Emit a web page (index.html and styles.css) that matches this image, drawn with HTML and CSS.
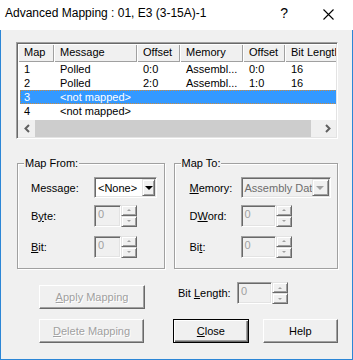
FILE: index.html
```html
<!doctype html>
<html>
<head>
<meta charset="utf-8">
<title>Advanced Mapping</title>
<link rel="stylesheet" href="styles.css">
</head>
<body>

<div class="window">
  <div class="titlebar">
    <span class="title">Advanced Mapping : 01, E3 (3-15A)-1</span>
    <span class="tb-help">?</span>
    <span class="tb-close">
      <svg width="11" height="11" viewBox="0 0 11 11"><path d="M0.5 0.5L10.5 10.5M10.5 0.5L0.5 10.5" stroke="#000" stroke-width="1.1" fill="none"/></svg>
    </span>
  </div>

  <div class="client">

    <div class="list">
      <div class="list-view">
        <div class="list-head">
          <div class="hcell">Map</div>
          <div class="hcell">Message</div>
          <div class="hcell">Offset</div>
          <div class="hcell">Memory</div>
          <div class="hcell">Offset</div>
          <div class="hcell">Bit Length</div>
        </div>
        <div class="list-row"><span>1</span><span>Polled</span><span>0:0</span><span>Assembl...</span><span>0:0</span><span>16</span></div>
        <div class="list-row"><span>2</span><span>Polled</span><span>2:0</span><span>Assembl...</span><span>1:0</span><span>16</span></div>
        <div class="list-row selected"><span>3</span><span>&lt;not mapped&gt;</span><span></span><span></span><span></span><span></span></div>
        <div class="list-row"><span>4</span><span>&lt;not mapped&gt;</span><span></span><span></span><span></span><span></span></div>
      </div>
      <div class="hscroll">
        <div class="sb-btn">
          <svg width="6" height="9" viewBox="0 0 6 9"><path d="M5 1L1.5 4.5L5 8" stroke="#606060" stroke-width="2" fill="none"/></svg>
        </div>
        <div class="sb-thumb"></div>
        <div class="sb-track"></div>
        <div class="sb-btn">
          <svg width="6" height="9" viewBox="0 0 6 9"><path d="M1 1L4.5 4.5L1 8" stroke="#606060" stroke-width="2" fill="none"/></svg>
        </div>
      </div>
    </div>

    <div class="groups">
      <fieldset class="group group-from">
        <legend>Map From:</legend>
        <div class="group-body">
          <div class="field">
            <label>Message:</label>
            <div class="combo">
              <span class="combo-text">&lt;None&gt;</span>
              <span class="combo-btn"><i class="tri-down"></i></span>
            </div>
          </div>
          <div class="field">
            <label>B<u>y</u>te:</label>
            <div class="spin">
              <span class="spin-edit">0</span>
              <span class="spin-btns"><span class="spin-up"><i class="tri-up"></i></span><span class="spin-down"><i class="tri-dn"></i></span></span>
            </div>
          </div>
          <div class="field field-bit">
            <label><u>B</u>it:</label>
            <div class="spin">
              <span class="spin-edit">0</span>
              <span class="spin-btns"><span class="spin-up"><i class="tri-up"></i></span><span class="spin-down"><i class="tri-dn"></i></span></span>
            </div>
          </div>
        </div>
      </fieldset>

      <fieldset class="group group-to">
        <legend>Map To:</legend>
        <div class="group-body">
          <div class="field">
            <label><u>M</u>emory:</label>
            <div class="combo disabled">
              <span class="combo-text">Assembly Data</span>
              <span class="combo-btn"><i class="tri-down"></i></span>
            </div>
          </div>
          <div class="field">
            <label>D<u>W</u>ord:</label>
            <div class="spin wide">
              <span class="spin-edit">0</span>
              <span class="spin-btns"><span class="spin-up"><i class="tri-up"></i></span><span class="spin-down"><i class="tri-dn"></i></span></span>
            </div>
          </div>
          <div class="field field-bit">
            <label>Bi<u>t</u>:</label>
            <div class="spin wide">
              <span class="spin-edit">0</span>
              <span class="spin-btns"><span class="spin-up"><i class="tri-up"></i></span><span class="spin-down"><i class="tri-dn"></i></span></span>
            </div>
          </div>
        </div>
      </fieldset>
    </div>

    <div class="action-row first">
      <button class="btn btn-wide btn-apply" disabled><u>A</u>pply Mapping</button>
      <div class="bitlen">
        <label>Bit <u>L</u>ength:</label>
        <div class="spin wide">
          <span class="spin-edit">0</span>
          <span class="spin-btns"><span class="spin-up"><i class="tri-up"></i></span><span class="spin-down"><i class="tri-dn"></i></span></span>
        </div>
      </div>
    </div>

    <div class="action-row">
      <button class="btn btn-wide" disabled><u>D</u>elete Mapping</button>
      <button class="btn btn-default"><u>C</u>lose</button>
      <button class="btn btn-help">Help</button>
    </div>

  </div>
</div>

</body>
</html>
```

FILE: styles.css
```css
body {
  margin: 0;
  font: 11px "Liberation Sans", Arial, sans-serif;
  color: #000;
}

.window {
  width: 353px;
  height: 360px;
  display: flex;
  flex-direction: column;
  background: #f0f0f0;
}

/* title bar */

.titlebar {
  height: 30px;
  flex: none;
  background: #fff;
  display: flex;
  align-items: center;
  padding: 0 19px 4px 5px;
  box-sizing: border-box;
}

.title {
  flex: 1;
  font-size: 12px;
  white-space: nowrap;
}

.tb-help {
  font-size: 14px;
  margin-right: 35px;
}

.tb-close {
  display: flex;
  margin-top: 2px;
}

/* client area */

.client {
  flex: 1;
  border: 1px solid #2b86d6;
  border-top: none;
  padding: 12px 14px 0 15px;
}

/* list view */

.list {
  width: 322px;
  height: 97px;
  box-sizing: border-box;
  border: 1px solid;
  border-color: #a0a0a0 #fff #fff #a0a0a0;
  box-shadow: inset 1px 1px 0 #696969, inset -1px -1px 0 #e3e3e3;
  padding: 1px;
  background: #fff;
  display: flex;
  flex-direction: column;
}

.list-view {
  flex: 1;
  overflow: hidden;
}

.list-head {
  display: grid;
  grid-template-columns: 36px 83px 43px 63px 42px 70px;
  width: 337px;
  height: 18px;
  margin-bottom: 0;
}

.hcell {
  background: #f0f0f0;
  box-shadow: inset 1px 1px 0 #fff, inset -1px -1px 0 #a0a0a0;
  padding: 2px 0 0 6px;
  white-space: nowrap;
  overflow: hidden;
}

.list-row {
  display: grid;
  grid-template-columns: 34px 83px 43px 63px 42px 70px;
  width: 335px;
  height: 14px;
  line-height: 14px;
  margin-left: 2px;
  white-space: nowrap;
}

.list-row span {
  padding-left: 4px;
  overflow: hidden;
}

.list-row span + span {
  padding-left: 6px;
}

.list-row.selected {
  background: #3399ff;
  color: #fff;
  outline: 1px dotted #d08a3a;
  outline-offset: -1px;
}

.hscroll {
  height: 17px;
  display: flex;
  background: #f0f0f0;
  margin-bottom: 0;
}

.sb-btn {
  width: 17px;
  display: flex;
  align-items: center;
  justify-content: center;
}

.sb-thumb {
  width: 276px;
  background: #cdcdcd;
}

.sb-track {
  flex: 1;
}

/* group boxes */

.groups {
  display: flex;
  gap: 9px;
  margin: 18px 0 0 1px;
}

.group {
  margin: 0;
  padding: 0;
  min-width: 0;
  height: 112px;
  box-sizing: border-box;
  border: 1px solid #a0a0a0;
  box-shadow: inset 1px 1px 0 #fff, 1px 1px 0 #fff;
}

.group-from {
  width: 148px;
}

.group-to {
  width: 165px;
}

.group legend {
  margin-left: 6px;
  padding: 0 1px;
  line-height: 13px;
  background: #f0f0f0;
}

.group-body {
  padding: 7px 0 0 13px;
}

.group-to .group-body {
  padding-left: 15px;
}

.field {
  display: flex;
  align-items: center;
  height: 21px;
}

.field + .field {
  margin-top: 7px;
}

.field.field-bit {
  margin-top: 10px;
}

.field label {
  width: 63px;
  flex: none;
}

.group-to .field label {
  width: 51px;
}

/* combo boxes */

.combo {
  width: 63px;
  height: 21px;
  box-sizing: border-box;
  border: 1px solid;
  border-color: #a0a0a0 #fff #fff #a0a0a0;
  box-shadow: inset 1px 1px 0 #696969, inset -1px -1px 0 #e3e3e3;
  background: #fff;
  display: flex;
  align-items: center;
  padding: 1px;
}

.group-to .combo {
  width: 90px;
}

.combo-text {
  flex: 1;
  padding-left: 2px;
  white-space: nowrap;
  overflow: hidden;
}

.combo-btn {
  width: 13px;
  height: 17px;
  box-sizing: border-box;
  flex: none;
  background: #f0f0f0;
  border: 1px solid;
  border-color: #e3e3e3 #696969 #696969 #e3e3e3;
  box-shadow: inset 1px 1px 0 #fff, inset -1px -1px 0 #a0a0a0;
  display: flex;
  align-items: center;
  justify-content: center;
}

.tri-down {
  width: 0;
  height: 0;
  border-left: 4px solid transparent;
  border-right: 4px solid transparent;
  border-top: 4px solid #000;
  margin-top: 1px;
}

.combo.disabled {
  background: #f0f0f0;
  color: #6d6d6d;
}

.combo.disabled .combo-btn {
  width: 17px;
}

.combo.disabled .tri-down {
  border-top-color: #a0a0a0;
}

/* spin boxes */

.spin {
  display: flex;
  height: 22px;
}

.spin-edit {
  width: 27px;
  box-sizing: border-box;
  border: 1px solid;
  border-color: #a0a0a0 #fff #fff #a0a0a0;
  box-shadow: inset 1px 1px 0 #696969, inset -1px -1px 0 #e3e3e3;
  background: #f0f0f0;
  color: #a0a0a0;
  padding: 2px 0 0 3px;
}

.spin.wide .spin-edit {
  width: 35px;
}

.spin-btns {
  width: 16px;
  display: flex;
  flex-direction: column;
}

.spin-up,
.spin-down {
  flex: 1;
  box-sizing: border-box;
  background: #f0f0f0;
  border: 1px solid;
  border-color: #e3e3e3 #696969 #696969 #e3e3e3;
  box-shadow: inset 1px 1px 0 #fff, inset -1px -1px 0 #a0a0a0;
  display: flex;
  align-items: center;
  justify-content: center;
}

.tri-up,
.tri-dn {
  width: 0;
  height: 0;
  border-left: 2px solid transparent;
  border-right: 2px solid transparent;
}

.tri-up {
  border-bottom: 2px solid #a0a0a0;
}

.tri-dn {
  border-top: 2px solid #a0a0a0;
}

/* bottom buttons */

.action-row {
  display: flex;
  align-items: flex-start;
  padding-left: 23px;
  margin-top: 10px;
}

.action-row.first {
  margin-top: 13px;
}

.btn {
  height: 24px;
  box-sizing: border-box;
  font: 11px "Liberation Sans", Arial, sans-serif;
  color: #000;
  background: #f0f0f0;
  border: 1px solid;
  border-color: #fff #696969 #696969 #fff;
  box-shadow: inset -1px -1px 0 #a0a0a0;
  padding: 0;
}

.btn-wide {
  width: 106px;
}

.btn[disabled] {
  color: #a0a0a0;
  text-shadow: 1px 1px 0 #fff;
}

.btn-apply {
  margin-top: 3px;
}

.btn-default {
  width: 76px;
  margin-left: 29px;
  border-color: #000;
  box-shadow: inset 1px 1px 0 #fff, inset -1px -1px 0 #696969, inset -2px -2px 0 #a0a0a0;
}

.btn-help {
  width: 76px;
  margin-left: 14px;
}

.bitlen {
  display: flex;
  align-items: center;
  margin-left: 29px;
}

.bitlen label {
  width: 63px;
  padding-left: 4px;
  box-sizing: border-box;
}
```
